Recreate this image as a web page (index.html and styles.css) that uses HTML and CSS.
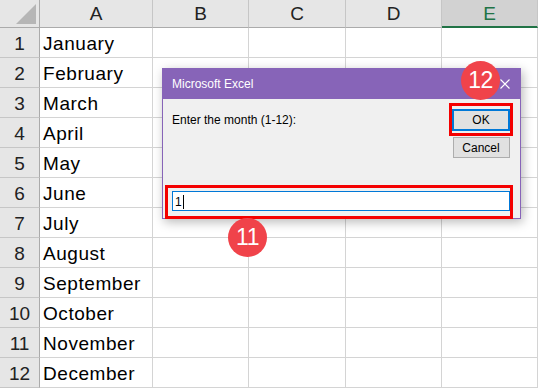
FILE: index.html
```html
<!DOCTYPE html>
<html lang="en">
<head>
    <meta charset="UTF-8">
    <title>Excel InputBox</title>
    <link rel="stylesheet" href="styles.css">
</head>
<body>
    <div class="sheet">
        <div class="hd corner"><span class="tri"></span></div>
        <div class="hd col">A</div>
        <div class="hd col">B</div>
        <div class="hd col">C</div>
        <div class="hd col">D</div>
        <div class="hd col sel">E</div>

        <div class="hd row">1</div><div class="cell">January</div><div class="cell"></div><div class="cell"></div><div class="cell"></div><div class="cell"></div>
        <div class="hd row">2</div><div class="cell">February</div><div class="cell"></div><div class="cell"></div><div class="cell"></div><div class="cell"></div>
        <div class="hd row">3</div><div class="cell">March</div><div class="cell"></div><div class="cell"></div><div class="cell"></div><div class="cell"></div>
        <div class="hd row">4</div><div class="cell">April</div><div class="cell"></div><div class="cell"></div><div class="cell"></div><div class="cell"></div>
        <div class="hd row">5</div><div class="cell">May</div><div class="cell"></div><div class="cell"></div><div class="cell"></div><div class="cell"></div>
        <div class="hd row">6</div><div class="cell">June</div><div class="cell"></div><div class="cell"></div><div class="cell"></div><div class="cell"></div>
        <div class="hd row">7</div><div class="cell">July</div><div class="cell"></div><div class="cell"></div><div class="cell"></div><div class="cell"></div>
        <div class="hd row">8</div><div class="cell">August</div><div class="cell"></div><div class="cell"></div><div class="cell"></div><div class="cell"></div>
        <div class="hd row">9</div><div class="cell">September</div><div class="cell"></div><div class="cell"></div><div class="cell"></div><div class="cell"></div>
        <div class="hd row">10</div><div class="cell">October</div><div class="cell"></div><div class="cell"></div><div class="cell"></div><div class="cell"></div>
        <div class="hd row">11</div><div class="cell">November</div><div class="cell"></div><div class="cell"></div><div class="cell"></div><div class="cell"></div>
        <div class="hd row">12</div><div class="cell">December</div><div class="cell"></div><div class="cell"></div><div class="cell"></div><div class="cell"></div>
    </div>

    <div class="dialog">
        <div class="titlebar">
            <span class="title">Microsoft Excel</span>
            <svg class="close" width="10" height="10" viewBox="0 0 10 10">
                <path d="M0.5 0.5 L9.5 9.5 M9.5 0.5 L0.5 9.5" stroke="#fff" stroke-width="1.1" fill="none"/>
            </svg>
        </div>
        <div class="body">
            <div class="prompt">Enter the month (1-12):</div>
            <div class="buttons">
                <div class="mark ok-mark"><button class="btn ok" type="button">OK</button></div>
                <button class="btn" type="button">Cancel</button>
            </div>
        </div>
        <div class="mark input-mark">
            <div class="input">1<span class="caret"></span></div>
        </div>
    </div>

    <div class="badge b12">12</div>
    <div class="badge b11">11</div>
</body>
</html>
```

FILE: styles.css
```css
body {
    margin: 0;
    background: #fff;
    font-family: "Liberation Sans", Arial, sans-serif;
    overflow: hidden;
}
.sheet {
    display: grid;
    grid-template-columns: 40px 113px 96px 97px 96px 96px;
    grid-template-rows: 28px repeat(12, 30px);
    width: 538px;
}
.hd, .cell {
    box-sizing: border-box;
    border-right: 1px solid #d4d4d4;
    border-bottom: 1px solid #d4d4d4;
}
.hd {
    background: #e6e6e6;
    color: #222;
    font-size: 19px;
    display: flex;
    align-items: center;
    justify-content: center;
}
.hd.col { border-right-color: #c6c6c6; border-bottom-color: #ababab; padding-top: 1px; }
.hd.row { border-right-color: #ababab; border-bottom-color: #c6c6c6; padding-top: 2px; }
.hd.sel {
    background: #d2d2d2;
    color: #217346;
    border-bottom: 2px solid #217346;
}
.corner {
    position: relative;
    border-right-color: #ababab;
    border-bottom-color: #ababab;
}
.tri {
    position: absolute;
    right: 3px;
    bottom: 3px;
    width: 0;
    height: 0;
    border-left: 20px solid transparent;
    border-bottom: 20px solid #b6b6b6;
}
.cell {
    font-size: 19px;
    letter-spacing: 0.55px;
    color: #000;
    padding: 2px 0 0 3px;
    display: flex;
    align-items: center;
    white-space: nowrap;
}

.dialog {
    position: absolute;
    left: 162px;
    top: 68px;
    width: 359px;
    height: 151px;
    box-sizing: border-box;
    background: #f0f0f0;
    border: 1px solid #8764b8;
    border-top: none;
    box-shadow: 2px 3px 10px rgba(0, 0, 0, 0.28);
    font-size: 12px;
    color: #000;
}
.titlebar {
    height: 31px;
    background: #8764b8;
    margin: 0 -1px;
    display: flex;
    align-items: center;
    justify-content: space-between;
    padding: 0 11px 0 10px;
}
.title { color: #fff; font-size: 12px; padding-top: 1px; }
.close { margin-top: 1px; }
.body {
    display: flex;
    justify-content: space-between;
    height: 82px;
    padding: 4px 7px 0 9px;
}
.prompt { padding-top: 10px; }
.buttons {
    display: flex;
    flex-direction: column;
    align-items: center;
    width: 64px;
}
.mark {
    box-sizing: border-box;
    border: 3px solid #f40000;
}
.ok-mark {
    width: 64px;
    height: 33px;
    padding: 3px 0 0 0;
}
.btn {
    display: block;
    width: 57px;
    height: 21px;
    margin: 0;
    padding: 0;
    box-sizing: border-box;
    background: #e1e1e1;
    border: 1px solid #adadad;
    font-family: "Liberation Sans", Arial, sans-serif;
    font-size: 12px;
    color: #000;
}
.btn.ok {
    width: 58px;
    height: 22px;
    border: 2px solid #0078d7;
}
.buttons > .btn { margin-top: 1px; }
.input-mark {
    margin: 0 7px 0 2px;
    height: 34px;
    padding: 3px 0 0 4px;
}
.input {
    box-sizing: border-box;
    height: 20px;
    background: #fff;
    border: 1px solid #0078d7;
    font-size: 12px;
    padding: 2px 0 0 2px;
    display: flex;
    align-items: center;
}
.caret {
    display: inline-block;
    width: 1px;
    height: 14px;
    background: #000;
    margin-left: 1px;
}

.badge {
    position: absolute;
    width: 39px;
    height: 39px;
    border-radius: 50%;
    background: #f0434a;
    color: #fff;
    font-size: 23px;
    display: flex;
    align-items: center;
    justify-content: center;
    letter-spacing: -0.5px;
}
.b12 { left: 461px; top: 61px; }
.b11 { left: 228px; top: 218px; }
```
